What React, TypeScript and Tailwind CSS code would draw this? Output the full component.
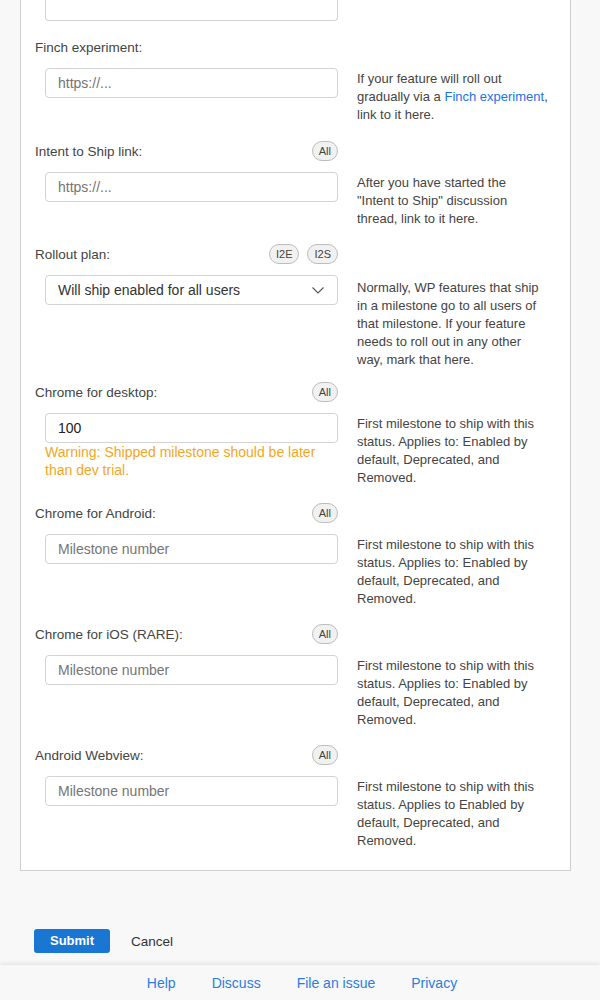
import React from "react";

const Pill = ({ children }: { children: React.ReactNode }) => (
  <span className="inline-flex h-[20px] items-center rounded-full border border-[#bdbdbd] bg-[#f1f1f1] px-[6px] text-[11px] leading-none text-[#444]">
    {children}
  </span>
);

const Label = ({ text, pills }: { text: string; pills?: string[] }) => (
  <div className="flex h-[20px] w-[303px] items-center justify-between">
    <span className="mt-[2px] text-[13.5px] text-[#444]">{text}</span>
    {pills && (
      <div className="flex gap-[8px]">
        {pills.map((p) => (
          <Pill key={p}>{p}</Pill>
        ))}
      </div>
    )}
  </div>
);

const Input = ({ placeholder, value }: { placeholder?: string; value?: string }) => (
  <div className="flex h-[30px] w-[293px] items-center rounded-[4px] border border-[#d3d3d3] bg-white px-[12px] text-[14px]">
    {value ? (
      <span className="text-[#222]">{value}</span>
    ) : (
      <span className="text-[#757575]">{placeholder}</span>
    )}
  </div>
);

const Help = ({ lines, pt = "pt-[2px]" }: { lines: React.ReactNode[]; pt?: string }) => (
  <div className={`ml-[19px] w-[200px] whitespace-nowrap text-[13px] leading-[18px] text-[#444] ${pt}`}>
    {lines.map((l, i) => (
      <div key={i}>{l}</div>
    ))}
  </div>
);

const milestoneHelp = (colon: boolean) => [
  "First milestone to ship with this",
  colon ? "status. Applies to: Enabled by" : "status. Applies to Enabled by",
  "default, Deprecated, and",
  "Removed.",
];

export default function App() {
  return (
    <div
      className="min-h-[1000px] bg-[#f8f8f8] text-[#333]"
      style={{ fontFamily: '"Liberation Sans", Arial, sans-serif' }}
    >
      <div className="ml-[20px] w-[551px] border border-t-0 border-[#cfcfcf] bg-white pb-[20px] pl-[14px]">
        {/* partially visible input */}
        <div className="ml-[10px] h-[21px] w-[293px] rounded-b-[4px] border border-t-0 border-[#d3d3d3]" />

        {/* Finch experiment */}
        <div className="mt-[16px]">
          <Label text="Finch experiment:" />
          <div className="mt-[11px] flex">
            <div className="ml-[10px]">
              <Input placeholder="https://..." />
            </div>
            <Help
              lines={[
                "If your feature will roll out",
                <>
                  gradually via a <span className="text-[#1a73e8]">Finch experiment</span>,
                </>,
                "link to it here.",
              ]}
            />
          </div>
        </div>

        {/* Intent to Ship */}
        <div className="mt-[17px]">
          <Label text="Intent to Ship link:" pills={["All"]} />
          <div className="mt-[11px] flex">
            <div className="ml-[10px]">
              <Input placeholder="https://..." />
            </div>
            <Help
              lines={[
                "After you have started the",
                '"Intent to Ship" discussion',
                "thread, link to it here.",
              ]}
            />
          </div>
        </div>

        {/* Rollout plan */}
        <div className="mt-[16px]">
          <Label text="Rollout plan:" pills={["I2E", "I2S"]} />
          <div className="mt-[11px] flex">
            <div className="ml-[10px]">
              <div className="flex h-[30px] w-[293px] items-center justify-between rounded-[4px] border border-[#d3d3d3] bg-white pl-[12px] pr-[13px] text-[14px] text-[#333]">
                <span>Will ship enabled for all users</span>
                <svg width="12" height="7" viewBox="0 0 12 7" fill="none">
                  <path d="M0.5 0.5 L6 6 L11.5 0.5" stroke="#555" strokeWidth="1.1" />
                </svg>
              </div>
            </div>
            <Help
              pt="pt-[4px]"
              lines={[
                "Normally, WP features that ship",
                "in a milestone go to all users of",
                "that milestone. If your feature",
                "needs to roll out in any other",
                "way, mark that here.",
              ]}
            />
          </div>
        </div>

        {/* Chrome for desktop */}
        <div className="mt-[13px]">
          <Label text="Chrome for desktop:" pills={["All"]} />
          <div className="mt-[11px] flex">
            <div className="ml-[10px] w-[293px]">
              <Input value="100" />
              <div className="text-[14px] leading-[18px] text-[#f5a623]">
                Warning: Shipped milestone should be later than dev trial.
              </div>
            </div>
            <Help lines={milestoneHelp(true)} />
          </div>
        </div>

        {/* Chrome for Android */}
        <div className="mt-[16px]">
          <Label text="Chrome for Android:" pills={["All"]} />
          <div className="mt-[11px] flex">
            <div className="ml-[10px]">
              <Input placeholder="Milestone number" />
            </div>
            <Help lines={milestoneHelp(true)} />
          </div>
        </div>

        {/* Chrome for iOS */}
        <div className="mt-[16px]">
          <Label text="Chrome for iOS (RARE):" pills={["All"]} />
          <div className="mt-[11px] flex">
            <div className="ml-[10px]">
              <Input placeholder="Milestone number" />
            </div>
            <Help lines={milestoneHelp(true)} />
          </div>
        </div>

        {/* Android Webview */}
        <div className="mt-[16px]">
          <Label text="Android Webview:" pills={["All"]} />
          <div className="mt-[11px] flex">
            <div className="ml-[10px]">
              <Input placeholder="Milestone number" />
            </div>
            <Help lines={milestoneHelp(false)} />
          </div>
        </div>
      </div>

      {/* Actions */}
      <div className="mt-[58px] flex items-center pl-[34px]">
        <button className="h-[24px] w-[76px] rounded-[3px] bg-[#1976d2] text-[13px] font-bold text-white">
          Submit
        </button>
        <span className="ml-[21px] mt-[2px] text-[13.5px] text-[#333]">Cancel</span>
      </div>

      {/* Footer */}
      <div className="mt-[12px] flex h-[36px] items-center justify-center gap-[36px] bg-[#f8f8f8] pl-[4px] text-[14px] text-[#2b7de0] shadow-[0_-2px_4px_rgba(0,0,0,0.08)]">
        <span>Help</span>
        <span>Discuss</span>
        <span>File an issue</span>
        <span>Privacy</span>
      </div>
    </div>
  );
}
